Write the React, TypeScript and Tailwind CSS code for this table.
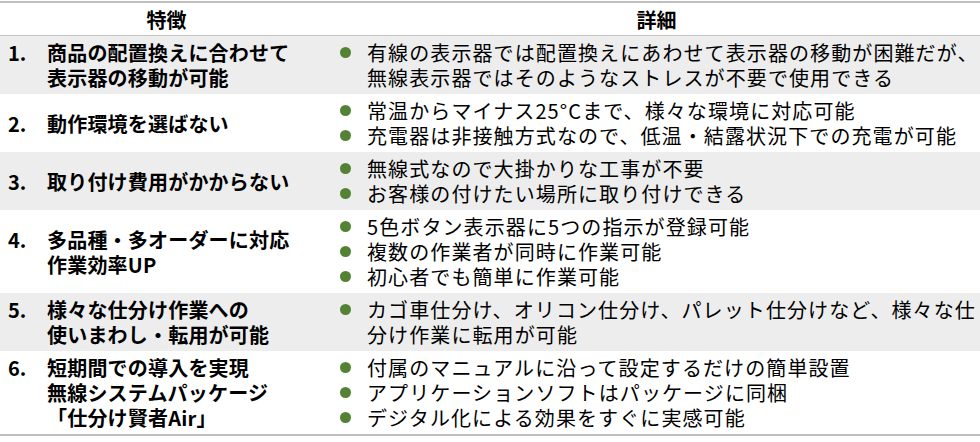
const rows: { no: string; feature: string[]; details: string[][] }[] = [
  {
    no: '1.',
    feature: ['商品の配置換えに合わせて', '表示器の移動が可能'],
    details: [['有線の表示器では配置換えにあわせて表示器の移動が困難だが、', '無線表示器ではそのようなストレスが不要で使用できる']],
  },
  {
    no: '2.',
    feature: ['動作環境を選ばない'],
    details: [['常温からマイナス25°Cまで、様々な環境に対応可能'], ['充電器は非接触方式なので、低温・結露状況下での充電が可能']],
  },
  {
    no: '3.',
    feature: ['取り付け費用がかからない'],
    details: [['無線式なので大掛かりな工事が不要'], ['お客様の付けたい場所に取り付けできる']],
  },
  {
    no: '4.',
    feature: ['多品種・多オーダーに対応', '作業効率UP'],
    details: [['5色ボタン表示器に5つの指示が登録可能'], ['複数の作業者が同時に作業可能'], ['初心者でも簡単に作業可能']],
  },
  {
    no: '5.',
    feature: ['様々な仕分け作業への', '使いまわし・転用が可能'],
    details: [['カゴ車仕分け、オリコン仕分け、パレット仕分けなど、様々な仕', '分け作業に転用が可能']],
  },
  {
    no: '6.',
    feature: ['短期間での導入を実現', '無線システムパッケージ', '「仕分け賢者Air」'],
    details: [['付属のマニュアルに沿って設定するだけの簡単設置'], ['アプリケーションソフトはパッケージに同梱'], ['デジタル化による効果をすぐに実感可能']],
  },
];

export default function App() {
  return (
    <div className="w-[980px] bg-white pt-px font-['Noto_Sans_CJK_JP',sans-serif] text-[20px] leading-[25px] text-black">
      <div className="border-t-2 border-b-2 border-[#bfbfbf]">
        <div className="grid h-[33px] grid-cols-[333px_1fr] items-center border-b border-[#c4c4c4] font-bold">
          <div className="text-center">特徴</div>
          <div className="text-center">詳細</div>
        </div>
        {rows.map((r, i) => (
          <div key={r.no} className={`grid grid-cols-[333px_1fr] py-1 ${i % 2 === 0 ? 'bg-[#ededed]' : 'bg-white'}`}>
            <div className="flex items-center font-bold">
              <div className="flex">
                <span className="w-[47px] shrink-0 pl-2">{r.no}</span>
                <div className="tracking-[0.2px]">
                  {r.feature.map((l) => (
                    <div key={l}>{l}</div>
                  ))}
                </div>
              </div>
            </div>
            <div className="tracking-[1.1px]">
              {r.details.map((d) => (
                <div key={d[0]} className="flex">
                  <span className="flex h-[25px] w-[34px] shrink-0 items-center pl-[7px]">
                    <span className="h-[11px] w-[11px] rounded-full bg-[#548235]" />
                  </span>
                  <div>
                    {d.map((l) => (
                      <div key={l}>{l}</div>
                    ))}
                  </div>
                </div>
              ))}
            </div>
          </div>
        ))}
      </div>
    </div>
  );
}
